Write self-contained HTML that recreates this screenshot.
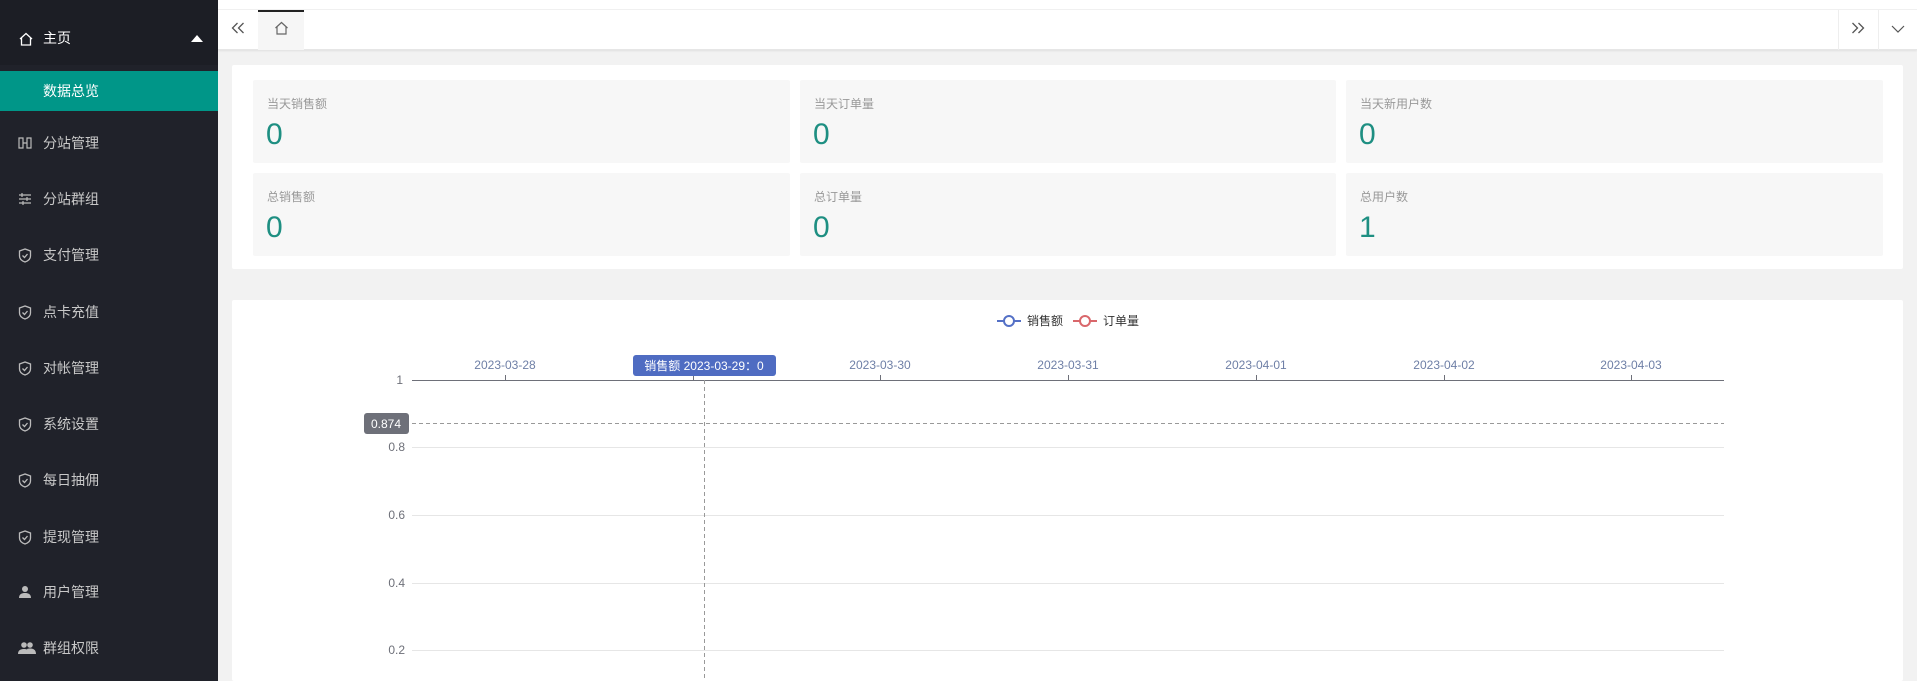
<!DOCTYPE html>
<html style="overflow:hidden;height:681px"><head><meta charset="utf-8"><style>
*{margin:0;padding:0;box-sizing:border-box}
body{width:1917px;height:681px;overflow:hidden;background:#f2f2f2;font-family:"Liberation Sans","Noto Sans CJK SC",sans-serif;position:relative}
.side{position:absolute;left:0;top:0;width:218px;height:681px;background:#20222a}
.side .top{position:absolute;left:0;top:0;width:218px;height:65px;background:#1c1e25}
.it{position:absolute;left:0;width:218px;height:40px;line-height:40px;color:#c8c8c8;font-size:14px;padding-left:43px}
.it svg{position:absolute;left:18px;top:13px}
.act{background:#009688;color:#fff;top:71px}
.bar{position:absolute;left:218px;top:0;right:0;height:50px;background:#fff;border-bottom:1px solid #e6e6e6;box-shadow:0 1px 2px rgba(0,0,0,.08)}
.card{position:absolute;background:#fff;border-radius:2px}
.stat{position:absolute;background:#f7f7f7;border-radius:2px}
.stat .l{position:absolute;left:14px;top:15px;font-size:12px;color:#999}
.stat .v{position:absolute;left:13px;top:38px;font-size:30px;color:#1e8f82}
</style></head><body>
<div class="side">
<div class="top"></div>
<div class="it" style="top:18px;color:#fff">
<svg width="16" height="16" viewBox="0 0 16 16"><path d="M2 8L8 2.5 14 8M3.5 7v7h9V7" fill="none" stroke="#fff" stroke-width="1.3"/></svg>主页
<svg style="left:191px;top:17px" width="12" height="7" viewBox="0 0 12 7"><path d="M0 7L6 0 12 7z" fill="#fff"/></svg></div>
<div class="it act">数据总览</div>
<div class="it" style="top:123px"><svg width="14" height="14" viewBox="0 0 14 14"><path d="M1 2h4v10H1zM9 2h4v10H9zM5 7h4" fill="none" stroke="#bbb" stroke-width="1.2"/></svg>分站管理</div>
<div class="it" style="top:179px"><svg width="14" height="14" viewBox="0 0 14 14"><path d="M1 3h12M1 7h12M1 11h12M4 1v4M9 5v4M5 9v4" stroke="#bbb" stroke-width="1.2"/></svg>分站群组</div>
<div class="it" style="top:235px"><svg width="14" height="15" viewBox="0 0 14 15"><path d="M7 1L1.5 3v5c0 3 2.5 5 5.5 6 3-1 5.5-3 5.5-6V3zM4.5 7.5l2 2 3-3.5" fill="none" stroke="#bbb" stroke-width="1.3"/></svg>支付管理</div>
<div class="it" style="top:292px"><svg width="14" height="15" viewBox="0 0 14 15"><path d="M7 1L1.5 3v5c0 3 2.5 5 5.5 6 3-1 5.5-3 5.5-6V3zM4.5 7.5l2 2 3-3.5" fill="none" stroke="#bbb" stroke-width="1.3"/></svg>点卡充值</div>
<div class="it" style="top:348px"><svg width="14" height="15" viewBox="0 0 14 15"><path d="M7 1L1.5 3v5c0 3 2.5 5 5.5 6 3-1 5.5-3 5.5-6V3zM4.5 7.5l2 2 3-3.5" fill="none" stroke="#bbb" stroke-width="1.3"/></svg>对帐管理</div>
<div class="it" style="top:404px"><svg width="14" height="15" viewBox="0 0 14 15"><path d="M7 1L1.5 3v5c0 3 2.5 5 5.5 6 3-1 5.5-3 5.5-6V3zM4.5 7.5l2 2 3-3.5" fill="none" stroke="#bbb" stroke-width="1.3"/></svg>系统设置</div>
<div class="it" style="top:460px"><svg width="14" height="15" viewBox="0 0 14 15"><path d="M7 1L1.5 3v5c0 3 2.5 5 5.5 6 3-1 5.5-3 5.5-6V3zM4.5 7.5l2 2 3-3.5" fill="none" stroke="#bbb" stroke-width="1.3"/></svg>每日抽佣</div>
<div class="it" style="top:517px"><svg width="14" height="15" viewBox="0 0 14 15"><path d="M7 1L1.5 3v5c0 3 2.5 5 5.5 6 3-1 5.5-3 5.5-6V3zM4.5 7.5l2 2 3-3.5" fill="none" stroke="#bbb" stroke-width="1.3"/></svg>提现管理</div>
<div class="it" style="top:572px"><svg width="14" height="14" viewBox="0 0 14 14"><circle cx="7" cy="4" r="3" fill="#bbb"/><path d="M1 13c0-4 3-5 6-5s6 1 6 5z" fill="#bbb"/></svg>用户管理</div>
<div class="it" style="top:628px"><svg width="18" height="14" viewBox="0 0 18 14"><circle cx="6" cy="4" r="2.8" fill="#bbb"/><circle cx="12" cy="4" r="2.8" fill="#bbb"/><path d="M0 13c0-4 3-5 6-5s6 1 6 5zM9 8c1-.5 2-.5 3-.5 3 0 6 1 6 5.5h-6z" fill="#bbb"/></svg>群组权限</div>
</div>
<div class="bar">
<div style="position:absolute;left:0;top:0;right:0;height:10px;border-bottom:1px solid #f0f0f0"></div>
<svg style="position:absolute;left:13px;top:22px" width="14" height="12" viewBox="0 0 14 12"><path d="M6.5 1L1.5 6l5 5M12.5 1l-5 5 5 5" fill="none" stroke="#555" stroke-width="1.3"/></svg>
<div style="position:absolute;left:40px;top:10px;width:46px;height:40px;background:#f6f6f6;border-top:2px solid #222"></div>
<svg style="position:absolute;left:56px;top:21px" width="15" height="14" viewBox="0 0 15 14"><path d="M1.5 7L7.5 1.5 13.5 7M3 6v7h9V6" fill="none" stroke="#666" stroke-width="1.2"/></svg>
<div style="position:absolute;left:1620px;top:10px;width:1px;height:40px;background:#eee"></div>
<div style="position:absolute;left:1660px;top:10px;width:1px;height:40px;background:#eee"></div>
<svg style="position:absolute;left:1633px;top:22px" width="14" height="12" viewBox="0 0 14 12"><path d="M1.5 1l5 5-5 5M7.5 1l5 5-5 5" fill="none" stroke="#555" stroke-width="1.3"/></svg>
<svg style="position:absolute;left:1673px;top:25px" width="14" height="8" viewBox="0 0 14 8"><path d="M1 1l6 6 6-6" fill="none" stroke="#555" stroke-width="1.2"/></svg>
</div>
<div class="card" style="left:232px;top:65px;width:1671px;height:204px"></div>
<div class="stat" style="left:253px;top:80px;width:537px;height:83px"><div class="l">当天销售额</div><div class="v">0</div></div>
<div class="stat" style="left:800px;top:80px;width:536px;height:83px"><div class="l">当天订单量</div><div class="v">0</div></div>
<div class="stat" style="left:1346px;top:80px;width:537px;height:83px"><div class="l">当天新用户数</div><div class="v">0</div></div>
<div class="stat" style="left:253px;top:173px;width:537px;height:83px"><div class="l">总销售额</div><div class="v">0</div></div>
<div class="stat" style="left:800px;top:173px;width:536px;height:83px"><div class="l">总订单量</div><div class="v">0</div></div>
<div class="stat" style="left:1346px;top:173px;width:537px;height:83px"><div class="l">总用户数</div><div class="v">1</div></div>
<div class="card" style="left:232px;top:300px;width:1671px;height:381px"></div>
<svg style="position:absolute;left:0;top:0" width="1917" height="681" font-family="Liberation Sans, Noto Sans CJK SC, sans-serif" font-size="12">
<g stroke="#5470c6" stroke-width="2" fill="#fff"><path d="M997 321h24"/><circle cx="1009" cy="321" r="5"/></g>
<text x="1027" y="325" fill="#333">销售额</text>
<g stroke="#d9676b" stroke-width="2" fill="#fff"><path d="M1073 321h24"/><circle cx="1085" cy="321" r="5"/></g>
<text x="1103" y="325" fill="#333">订单量</text>
<g stroke="#e6e6e6"><path d="M412 447.5h1312M412 515.5h1312M412 583.5h1312M412 650.5h1312"/></g>
<path d="M412 380.5h1312" stroke="#6e7079"/>
<g stroke="#6e7079"><path d="M505.5 375v5M693.5 375v5M880.5 375v5M1068.5 375v5M1256.5 375v5M1444.5 375v5M1631.5 375v5"/></g>
<g fill="#6e7fa6" text-anchor="middle"><text x="505" y="369">2023-03-28</text><text x="880" y="369">2023-03-30</text><text x="1068" y="369">2023-03-31</text><text x="1256" y="369">2023-04-01</text><text x="1444" y="369">2023-04-02</text><text x="1631" y="369">2023-04-03</text></g>
<g fill="#6e7079" text-anchor="end"><text x="403" y="384">1</text><text x="405" y="451">0.8</text><text x="405" y="519">0.6</text><text x="405" y="587">0.4</text><text x="405" y="654">0.2</text></g>
<path d="M412 423.5h1312" stroke="#999" stroke-dasharray="4 3"/>
<path d="M704.5 380v301" stroke="#999" stroke-dasharray="4 3"/>
<rect x="364" y="413" width="45" height="21" rx="3" fill="#6e7079"/><text x="386" y="428" fill="#fff" text-anchor="middle">0.874</text>
<rect x="633" y="355" width="143" height="21" rx="3" fill="#4f6cc2"/><text x="704" y="370" fill="#fff" text-anchor="middle">销售额  2023-03-29：0</text>
</svg>
</body></html>
